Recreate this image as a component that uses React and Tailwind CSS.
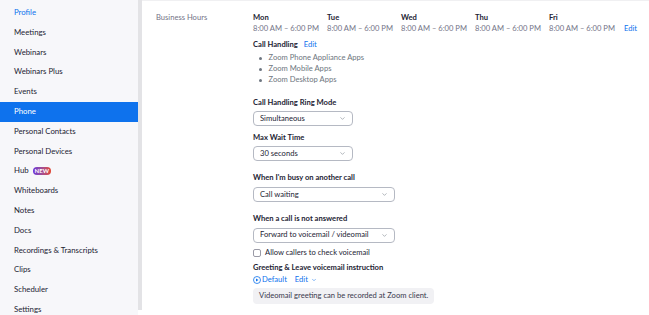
import { ChevronDown } from 'lucide-react';

const navItems = [
  'Profile', 'Meetings', 'Webinars', 'Webinars Plus', 'Events', 'Phone',
  'Personal Contacts', 'Personal Devices', 'Hub', 'Whiteboards', 'Notes',
  'Docs', 'Recordings & Transcripts', 'Clips', 'Scheduler', 'Settings',
];

const days = ['Mon', 'Tue', 'Wed', 'Thu', 'Fri'];

const Select = ({ value, wide }) => (
  <div className={`flex items-center justify-between h-[15px] rounded-[4px] border border-[#b5b9c3] bg-white pl-[6px] pr-[6px] ${wide ? 'w-[142px]' : 'w-[100px]'}`}>
    <span className="text-[#232333]">{value}</span>
    <ChevronDown size={7} className="text-[#6e7680]" strokeWidth={1.8} />
  </div>
);

const App = () => {
  return (
    <div className="flex w-[649px] h-[315px] overflow-hidden bg-white text-[7.6px] font-['Lato',sans-serif] leading-none">
      {/* Sidebar */}
      <div className="w-[138px] h-full bg-[#f7f7fa] pt-[3px] shrink-0">
        {navItems.map(item => (
          <div
            key={item}
            className={`h-[19.8px] flex items-center pl-[14px] text-[7.8px] ${item === 'Phone' ? 'bg-[#0e72ed] text-white' : item === 'Profile' ? 'text-[#0e72ed]' : 'text-[#232333]'}`}
          >
            <span>{item}</span>
            {item === 'Hub' && (
              <span className="ml-[4px] h-[8px] px-[2px] rounded-full bg-gradient-to-r from-[#6c2bd9] to-[#e2442b] text-white text-[6px] font-bold flex items-center">NEW</span>
            )}
          </div>
        ))}
      </div>
      <div className="w-[4px] h-[310px] bg-[#e3e3e6] shrink-0" />

      {/* Main */}
      <div className="flex-1 border-t border-[#f0f0f2] pl-[14px] pt-[13px] text-[#232333]">
        <div className="flex">
          <div className="w-[97px] text-[#747487]">Business Hours</div>
          <div className="flex-1">
            <div className="flex items-end">
              {days.map(d => (
                <div key={d} className="w-[74px]">
                  <div className="font-bold text-[#232333]">{d}</div>
                  <div className="mt-[3px] text-[#747487] whitespace-nowrap">8:00 AM – 6:00 PM</div>
                </div>
              ))}
              <div className="text-[#0e72ed] ml-[1px]">Edit</div>
            </div>

            <div className="mt-[9px] flex gap-[6px]">
              <span className="font-bold">Call Handling</span>
              <span className="text-[#0e72ed]">Edit</span>
            </div>
            <ul className="mt-[4px] ml-[6px] text-[#6e7680]">
              {['Zoom Phone Appliance Apps', 'Zoom Mobile Apps', 'Zoom Desktop Apps'].map(t => (
                <li key={t} className="flex items-center h-[11px]">
                  <span className="w-[2.5px] h-[2.5px] rounded-full bg-[#6e7680] mr-[7px]" />
                  {t}
                </li>
              ))}
            </ul>

            <div className="mt-[13.5px] font-bold">Call Handling Ring Mode</div>
            <div className="mt-[4px]"><Select value="Simultaneous" /></div>

            <div className="mt-[8px] font-bold">Max Wait Time</div>
            <div className="mt-[5px]"><Select value="30 seconds" /></div>

            <div className="mt-[13px] font-bold">When I'm busy on another call</div>
            <div className="mt-[5px]"><Select value="Call waiting" wide /></div>

            <div className="mt-[13px] font-bold">When a call is not answered</div>
            <div className="mt-[5px]"><Select value="Forward to voicemail / videomail" wide /></div>

            <div className="mt-[6px] flex items-center">
              <span className="w-[8px] h-[8px] rounded-[2px] border border-[#9a9aa6] bg-white mr-[4px]" />
              <span>Allow callers to check voicemail</span>
            </div>

            <div className="mt-[7px] font-bold">Greeting &amp; Leave voicemail instruction</div>

            <div className="mt-[5px] flex items-center text-[#0e72ed]">
              <svg width="8" height="8" viewBox="0 0 16 16" className="mr-[1px]">
                <circle cx="8" cy="8" r="7" fill="none" stroke="#0e72ed" strokeWidth="1.6" />
                <path d="M6 4.8 L11 8 L6 11.2 Z" fill="#0e72ed" />
              </svg>
              <span>Default</span>
              <span className="ml-[8px]">Edit</span>
              <ChevronDown size={6} className="ml-[3px]" strokeWidth={2} />
            </div>

            <div className="mt-[4px] inline-flex items-center h-[16px] px-[6px] rounded-[4px] bg-[#f1f1f4] text-[#39394d]">
              Videomail greeting can be recorded at Zoom client.
            </div>
          </div>
        </div>
      </div>
    </div>
  );
};

export default App;
